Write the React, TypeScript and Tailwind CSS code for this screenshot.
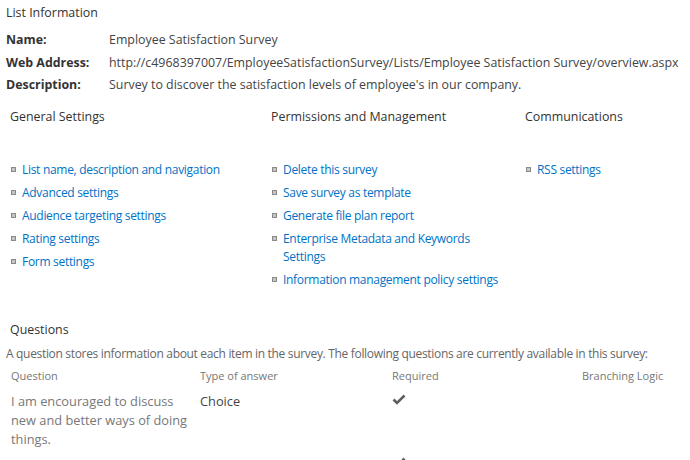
const font = { fontFamily: '"Open Sans", "Noto Sans", sans-serif' };

const general = [
  'List name, description and navigation',
  'Advanced settings',
  'Audience targeting settings',
  'Rating settings',
  'Form settings',
];

const permissions = [
  'Delete this survey',
  'Save survey as template',
  'Generate file plan report',
  'Enterprise Metadata and Keywords Settings',
  'Information management policy settings',
];

const communications = ['RSS settings'];

function LinkList({ items }: { items: string[] }) {
  return (
    <ul className="flex flex-col">
      {items.map((item) => (
        <li key={item} className="flex items-start leading-[18px] mb-[5px]">
          <span className="mt-[6px] ml-[1px] mr-[6px] w-[5px] h-[5px] shrink-0 bg-[#c4c4c4] border border-[#8a8a8a]" />
          <a href="#" className="text-[#0072c6] text-[12px] tracking-[-0.3px] max-w-[222px]">
            {item}
          </a>
        </li>
      ))}
    </ul>
  );
}

function Check() {
  return (
    <svg width="14" height="11" viewBox="0 0 14 11" className="block">
      <path d="M1.5 5.5 L5 9 L12.5 1.5" fill="none" stroke="#5f5f5f" strokeWidth="2.6" />
    </svg>
  );
}

export default function App() {
  return (
    <div className="w-[690px] h-[460px] overflow-hidden bg-white text-[12.4px] text-[#444]" style={font}>
      {/* List Information */}
      <div className="px-[6px] pt-[4px]">
        <h2 className="text-[#333] leading-[18px]">List Information</h2>
        <div className="mt-[9px] flex flex-col gap-[4.5px] leading-[18px]">
          <div className="flex">
            <span className="w-[103px] shrink-0 font-bold text-[#333]">Name:</span>
            <span>Employee Satisfaction Survey</span>
          </div>
          <div className="flex">
            <span className="w-[103px] shrink-0 font-bold text-[#333]">Web Address:</span>
            <span className="whitespace-nowrap">http://c4968397007/EmployeeSatisfactionSurvey/Lists/Employee Satisfaction Survey/overview.aspx</span>
          </div>
          <div className="flex">
            <span className="w-[103px] shrink-0 font-bold text-[#333]">Description:</span>
            <span>Survey to discover the satisfaction levels of employee's in our company.</span>
          </div>
        </div>
      </div>

      {/* Settings columns */}
      <div className="mt-[14px] pl-[10px] grid grid-cols-[261px_254px_1fr]">
        <div>
          <h3 className="text-[#333] leading-[18px] mb-[35px]">General Settings</h3>
          <LinkList items={general} />
        </div>
        <div>
          <h3 className="text-[#333] leading-[18px] mb-[35px]">Permissions and Management</h3>
          <LinkList items={permissions} />
        </div>
        <div>
          <h3 className="text-[#333] leading-[18px] mb-[35px]">Communications</h3>
          <LinkList items={communications} />
        </div>
      </div>

      {/* Questions */}
      <div className="mt-[27px]">
        <h3 className="pl-[10px] text-[#333] leading-[18px]">Questions</h3>
        <p className="mt-[6px] pl-[6px] leading-[18px] text-[12px] tracking-[-0.32px] text-[#666] whitespace-nowrap">
          A question stores information about each item in the survey. The following questions are currently available in this survey:
        </p>
        <div className="mt-[4px] pl-[11px] grid grid-cols-[189px_192px_190px_1fr] text-[11px] text-[#777] leading-[18px]">
          <span>Question</span>
          <span>Type of answer</span>
          <span>Required</span>
          <span>Branching Logic</span>
        </div>
        <div className="mt-[7px] pl-[11px] grid grid-cols-[189px_192px_190px_1fr] leading-[19px]">
          <span className="text-[12.8px] text-[#777] pr-[10px]">I am encouraged to discuss new and better ways of doing things.</span>
          <span className="text-[12.8px] text-[#444]">Choice</span>
          <span className="pt-[2px]"><Check /></span>
          <span />
        </div>
        <div className="mt-[6px] pl-[11px] grid grid-cols-[189px_192px_190px_1fr] leading-[19px]">
          <span />
          <span />
          <span className="pt-[2px]"><Check /></span>
          <span />
        </div>
      </div>
    </div>
  );
}
